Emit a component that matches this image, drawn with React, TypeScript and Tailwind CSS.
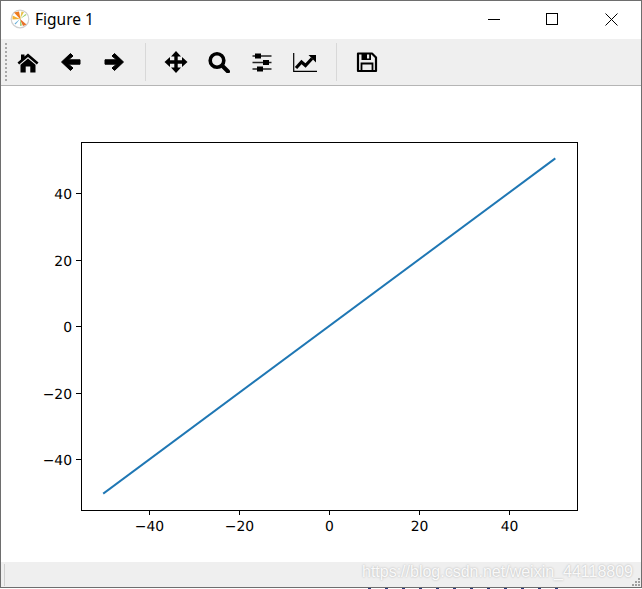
import React from "react";

const xTicks = [
  { x: 149, label: "−40" },
  { x: 239, label: "−20" },
  { x: 329, label: "0" },
  { x: 419, label: "20" },
  { x: 509, label: "40" },
];

const yTicks = [
  { y: 193, label: "40" },
  { y: 260, label: "20" },
  { y: 326, label: "0" },
  { y: 393, label: "−20" },
  { y: 459, label: "−40" },
];

function AppIcon() {
  return (
    <svg width="20" height="20" viewBox="0 0 20 20" className="shrink-0">
      <circle cx="10" cy="10" r="8.8" fill="#fff" stroke="#cfcfcf" strokeWidth="1.2" />
      <path d="M10.5 10.5 L4 3.5 L9 2.5 Z" fill="#ee7a20" />
      <path d="M10 10 L2.5 6.5 L2.5 10.5 Z" fill="#f2b134" />
      <path d="M10 10 L11.5 2.5 L14 3 Z" fill="#e8c24a" />
      <path d="M10 10 L16.5 6 L15.5 5 Z" fill="#9ccf6a" />
      <path d="M9.5 9.5 L16.5 15.5 L13 17 Z" fill="#e8702a" />
      <path d="M10 10 L10 17 L12 16.5 Z" fill="#a5d07a" />
      <path d="M10 10 L4.5 14.5 L5.5 15.5 Z" fill="#6ab0d8" />
    </svg>
  );
}

function ToolButton({ children }: { children: React.ReactNode }) {
  return <div className="flex w-[43px] justify-center">{children}</div>;
}

function ToolIcon({ children, w = 22 }: { children: React.ReactNode; w?: number }) {
  return (
    <svg width={w} height="22" viewBox={`0 0 ${w} 22`} className="shrink-0 text-black">
      {children}
    </svg>
  );
}

const HomeIcon = () => (
  <ToolIcon>
    <g transform="translate(0.5 1)">
      <path d="M10.5 1.5 L21 10.5 L19.3 12.5 L10.5 5 L1.7 12.5 L0 10.5 L3.5 7.5 V2.5 H7 V4.5 Z" fill="currentColor" />
      <path d="M10.5 6.5 L18 12.8 V20.5 H12.8 V14.5 H8.2 V20.5 H3 V12.8 Z" fill="currentColor" />
    </g>
  </ToolIcon>
);

const ArrowLeft = () => (
  <ToolIcon>
    <path
      d="M1.5 11 L10.5 2.5 L13 5 L8.5 8.8 H20 V13.2 H8.5 L13 17 L10.5 19.5 Z"
      fill="currentColor"
      stroke="currentColor"
      strokeWidth="1"
      strokeLinejoin="round"
    />
  </ToolIcon>
);

const ArrowRight = () => (
  <ToolIcon>
    <path
      d="M20.5 11 L11.5 2.5 L9 5 L13.5 8.8 H2 V13.2 H13.5 L9 17 L11.5 19.5 Z"
      fill="currentColor"
      stroke="currentColor"
      strokeWidth="1"
      strokeLinejoin="round"
    />
  </ToolIcon>
);

const MoveIcon = () => (
  <ToolIcon w={24}>
    <path d="M12 3 V19 M4 11 H20" stroke="currentColor" strokeWidth="3.4" />
    <path d="M12 0 L17 5.5 H7 Z M12 22 L17 16.5 H7 Z M0.5 11 L6 6 V16 Z M23.5 11 L18 6 V16 Z" fill="currentColor" />
  </ToolIcon>
);

const SearchIcon = () => (
  <ToolIcon>
    <circle cx="9" cy="9.5" r="6.8" fill="none" stroke="currentColor" strokeWidth="3.6" />
    <path d="M14.5 15 L20 20.5" stroke="currentColor" strokeWidth="4" strokeLinecap="round" />
  </ToolIcon>
);

const SlidersIcon = () => (
  <ToolIcon w={20}>
    <path d="M0.5 5 H19.5 M0.5 11.5 H19.5 M0.5 18 H19.5" stroke="#222" strokeWidth="1.5" />
    <rect x="3" y="2.5" width="6" height="5" fill="currentColor" />
    <rect x="11" y="9" width="6" height="5" fill="currentColor" />
    <rect x="5" y="15.5" width="6" height="5" fill="currentColor" />
  </ToolIcon>
);

const ChartIcon = () => (
  <ToolIcon w={24}>
    <path d="M0.7 2 V20.4 H24" fill="none" stroke="currentColor" strokeWidth="1.2" />
    <path d="M3 17 L8.5 11 L12.5 14.5 L19 7.5" fill="none" stroke="currentColor" strokeWidth="3.2" />
    <path d="M15.5 4 H23 V11.5 Z" fill="currentColor" />
  </ToolIcon>
);

const SaveIcon = () => (
  <ToolIcon>
    <path d="M2 2.5 H16 L20 6.5 V20 H2 Z" fill="none" stroke="currentColor" strokeWidth="2.2" strokeLinejoin="round" />
    <path d="M5.5 2.5 H15 V9 H5.5 Z" fill="currentColor" />
    <rect x="11" y="3.5" width="2.2" height="4" fill="#efefef" />
    <path d="M5.5 19.5 V12.5 H16.5 V19.5" fill="none" stroke="currentColor" strokeWidth="1.8" />
  </ToolIcon>
);

function Plot() {
  return (
    <svg
      width="640"
      height="476"
      viewBox="1 86 640 476"
      className="block"
      style={{ fontFamily: "'DejaVu Sans', sans-serif", textRendering: "geometricPrecision" }}
    >
      <rect x="81.5" y="142.5" width="496" height="368" fill="#fff" stroke="#000" strokeWidth="1" />
      <line x1="104" y1="493" x2="554.5" y2="159" stroke="#1f77b4" strokeWidth="2" strokeLinecap="square" />
      {xTicks.map((t) => (
        <g key={t.label}>
          <line x1={t.x + 0.5} y1="510" x2={t.x + 0.5} y2="515" stroke="#000" />
          <text x={t.x + 0.5} y="531" textAnchor="middle" fontSize="13.9" fill="#000">
            {t.label}
          </text>
        </g>
      ))}
      {yTicks.map((t) => (
        <g key={t.label}>
          <line x1="76" y1={t.y + 0.5} x2="81" y2={t.y + 0.5} stroke="#000" />
          <text x="72" y={t.y + 5.5} textAnchor="end" fontSize="13.9" fill="#000">
            {t.label}
          </text>
        </g>
      ))}
    </svg>
  );
}

export default function App() {
  return (
    <div className="relative w-[642px] h-[589px] overflow-hidden bg-white">
      <div className="relative h-[588px] overflow-hidden bg-white border border-[#6e6e6e] font-['Noto_Sans',sans-serif]">
        <div className="flex items-center h-[38px] pb-[2px] bg-white">
          <div className="flex items-center gap-[5px] pl-[9px]">
            <AppIcon />
            <span className="mt-[2px] text-[15.5px] leading-none text-black">Figure 1</span>
          </div>
          <div className="ml-auto mr-[1px] flex items-center">
            <div className="w-[57px] flex justify-center">
              <div className="w-3 h-px bg-black" />
            </div>
            <div className="w-[60px] flex justify-center">
              <div className="w-3 h-3 border border-black" />
            </div>
            <div className="w-[58px] flex justify-center">
              <svg width="13" height="13" viewBox="0 0 13 13">
                <path d="M0.5 0.5 L12.5 12.5 M12.5 0.5 L0.5 12.5" stroke="#000" strokeWidth="1" />
              </svg>
            </div>
          </div>
        </div>

        <div className="flex items-center h-[47px] bg-[#efefef] border-b border-[#b5b5b5]">
          <div className="ml-1 -mr-px w-[2px] h-[38px] border-l-2 border-dotted border-[#a8a8a8]" />
          <ToolButton><HomeIcon /></ToolButton>
          <ToolButton><ArrowLeft /></ToolButton>
          <ToolButton><ArrowRight /></ToolButton>
          <div className="ml-[10px] mr-[8px] w-px h-[38px] bg-[#d8d8d8]" />
          <ToolButton><MoveIcon /></ToolButton>
          <ToolButton><SearchIcon /></ToolButton>
          <ToolButton><SlidersIcon /></ToolButton>
          <ToolButton><ChartIcon /></ToolButton>
          <div className="ml-[10px] mr-[8px] w-px h-[38px] bg-[#d8d8d8]" />
          <ToolButton><SaveIcon /></ToolButton>
        </div>

        <Plot />

        <div className="flex items-center h-[25px] bg-[#efefef]">
          <div className="ml-[3px] w-px h-[22px] bg-[#d0d0d0]" />
        </div>

        <div className="absolute right-[1px] bottom-[1px] grid grid-cols-3 gap-px">
          {[0, 1, 2, 3, 4, 5, 6, 7, 8].map((i) => (
            <div key={i} className={i === 0 || i === 1 || i === 3 ? "w-[2px] h-[2px]" : "w-[2px] h-[2px] bg-[#a0a0a0]"} />
          ))}
        </div>
      </div>

      <div className="flex h-px pl-[368px] gap-[14px]">
        {[0, 1, 2, 3, 4, 5, 6, 7, 8, 9, 10, 11].map((i) => (
          <div key={i} className="w-[3px] h-px bg-[#2a3a78]" />
        ))}
      </div>

      <div className="absolute right-[9px] bottom-[9px] text-[16px] leading-none text-white/90 font-['Liberation_Sans',sans-serif] [text-shadow:0_0_2px_#a8a8a8]">
        https://blog.csdn.net/weixin_44118809
      </div>
    </div>
  );
}
